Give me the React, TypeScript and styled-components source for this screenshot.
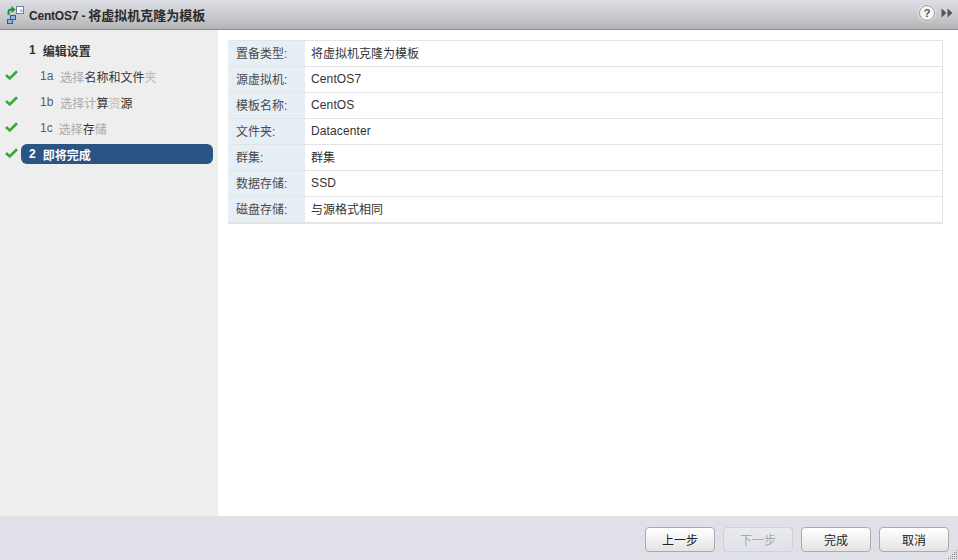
import React from "react";
import styled, { createGlobalStyle } from "styled-components";

const GlobalStyle = createGlobalStyle`
  html, body {
    margin: 0;
    padding: 0;
    background: #fff;
  }
  body {
    font-family: "Liberation Sans", "Noto Sans CJK SC", Arial, sans-serif;
    font-size: 12px;
    color: #333;
  }
`;

const Dialog = styled.div`
  width: 958px;
  height: 560px;
  display: flex;
  flex-direction: column;
  overflow: hidden;
  position: relative;
`;

const TitleBar = styled.div`
  height: 29px;
  flex: none;
  display: flex;
  align-items: center;
  padding: 0 5px 0 7px;
  background: linear-gradient(180deg, #dedfe5 0%, #c9cacd 55%, #b4b5b7 100%);
  border-bottom: 1px solid #8c8c8e;
`;

const TitleText = styled.div`
  margin-left: 4px;
  flex: 1;
  font-size: 13px;
  font-weight: bold;
  color: #2b2b2b;
`;

const TitleLatin = styled.span`
  font-size: 12px;
  letter-spacing: -0.2px;
`;

const HelpButton = styled.div`
  width: 14px;
  height: 14px;
  border-radius: 50%;
  background: #f6f6f6;
  border: 1px solid #9a9a9a;
  box-shadow: 0 0 1px 1px rgba(255, 255, 255, 0.45);
  color: #555;
  font-size: 11px;
  font-weight: bold;
  line-height: 14px;
  text-align: center;
  margin: 0 6px 3px 0;
`;

const ExpandSlot = styled.div`
  display: flex;
  margin-bottom: 3px;
`;

const Body = styled.div`
  flex: 1;
  display: flex;
  min-height: 0;
`;

const Sidebar = styled.div`
  width: 218px;
  flex: none;
  background: #eeeeee;
  padding-top: 7px;
  box-sizing: border-box;
`;

const StepRow = styled.div`
  height: 26px;
  display: flex;
  align-items: center;
  padding-left: 5px;
`;

const CheckSlot = styled.div`
  width: 16px;
  flex: none;
  display: flex;
  align-items: center;
  padding-bottom: 2px;
  box-sizing: border-box;
`;

const StepLabel = styled.div<{ $active?: boolean; $sub?: boolean; $gap: number }>`
  display: flex;
  align-items: center;
  box-sizing: border-box;
  width: 192px;
  height: 20px;
  border-radius: 6px;
  padding-left: ${(p) => (p.$sub ? 19 : 8)}px;
  background: ${(p) => (p.$active ? "#2a5484" : "transparent")};
  color: ${(p) => (p.$active ? "#fff" : "#333")};
  font-weight: ${(p) => (p.$sub ? "normal" : "bold")};
  font-size: 12px;
  gap: ${(p) => p.$gap}px;
`;

const StepNumber = styled.span<{ $sub?: boolean }>`
  color: ${(p) => (p.$sub ? "#555f6b" : "inherit")};
`;

const Faint = styled.span`
  color: #a9a9ab;
`;

const Tinted = styled.span`
  color: #c9b9a6;
`;

const Main = styled.div`
  flex: 1;
  background: #fff;
  padding: 10px 15px 0 10px;
`;

const SummaryTable = styled.div`
  border: 1px solid #e4e4e4;
  border-bottom-width: 2px;
  border-left: none;
  box-sizing: border-box;
  width: 715px;
`;

const SummaryRow = styled.div`
  display: flex;
  height: 26px;
  box-sizing: border-box;
  border-bottom: 1px solid #e4e4e4;

  &:last-child {
    border-bottom: none;
    height: 25px;
  }
`;

const RowLabel = styled.div`
  width: 77px;
  flex: none;
  box-sizing: border-box;
  padding: 1px 0 0 8px;
  background: #e6eef6;
  line-height: 25px;
  color: #4a4a4a;
`;

const RowValue = styled.div<{ $latin: boolean }>`
  flex: 1;
  padding: ${(p) => (p.$latin ? 0 : 1)}px 0 0 6px;
  line-height: 25px;
  color: #333;
  letter-spacing: ${(p) => (p.$latin ? 0.13 : 0)}px;
`;

const Footer = styled.div`
  height: 44px;
  flex: none;
  background: #dfe0e8;
  display: flex;
  justify-content: flex-end;
  align-items: flex-start;
  gap: 8px;
  padding: 11px 9px 0 0;
  box-sizing: border-box;
`;

const FooterButton = styled.div<{ $disabled?: boolean }>`
  width: 70px;
  height: 25px;
  box-sizing: border-box;
  border: 1px solid ${(p) => (p.$disabled ? "#cfd0d6" : "#a9abae")};
  border-radius: 4px;
  background: ${(p) =>
    p.$disabled
      ? "linear-gradient(180deg, #e9eaee 0%, #e1e2e7 100%)"
      : "linear-gradient(180deg, #ffffff 0%, #f1f1f1 55%, #e3e3e3 100%)"};
  color: ${(p) => (p.$disabled ? "#a8a9ad" : "#222")};
  text-align: center;
  padding-top: 1px;
  line-height: 24px;
  font-size: 12px;
`;

const ResizeGrip = styled.svg`
  position: absolute;
  right: 0;
  bottom: 0;
`;

const CloneIcon = () => (
  <svg width="18" height="18" viewBox="0 0 18 18">
    <rect x="9.5" y="0.5" width="7" height="7" fill="#fff" stroke="#6d7f9c" />
    <rect x="13" y="3.5" width="2.5" height="2.5" fill="#9db4d0" />
    <rect x="3.5" y="9.5" width="5" height="4" fill="#8fb4e0" stroke="#2f5c9c" />
    <rect x="0.5" y="13.5" width="5" height="4" fill="#8fb4e0" stroke="#2f5c9c" />
    <path d="M1.5 9 V6 Q1.5 3.5 4 3.5 H5" fill="none" stroke="#1f8f2f" strokeWidth="2" />
    <path d="M4.5 0 L8.5 3.5 L4.5 7 Z" fill="#1f8f2f" />
  </svg>
);

const Check = () => (
  <svg width="13" height="10" viewBox="0 0 13 10">
    <path d="M1 5 L4.7 8.4 L12 1.2" fill="none" stroke="#35a835" strokeWidth="2.6" />
  </svg>
);

const ExpandIcon = () => (
  <svg width="12" height="10" viewBox="0 0 12 10">
    <path d="M0.5 0.5 L5.5 5 L0.5 9.5 Z M6.5 0.5 L11.5 5 L6.5 9.5 Z" fill="#55565a" />
  </svg>
);

const summary = [
  { label: "置备类型:", value: "将虚拟机克隆为模板", latin: false },
  { label: "源虚拟机:", value: "CentOS7", latin: true },
  { label: "模板名称:", value: "CentOS", latin: true },
  { label: "文件夹:", value: "Datacenter", latin: true },
  { label: "群集:", value: "群集", latin: false },
  { label: "数据存储:", value: "SSD", latin: true },
  { label: "磁盘存储:", value: "与源格式相同", latin: false },
];

const grip = [
  [10, 1],
  [8, 3],
  [10, 3],
  [6, 5],
  [8, 5],
  [10, 5],
  [4, 7],
  [6, 7],
  [8, 7],
  [10, 7],
  [2, 9],
  [4, 9],
  [6, 9],
  [8, 9],
  [10, 9],
];

export default function App() {
  return (
    <>
      <GlobalStyle />
      <Dialog>
        <TitleBar>
          <CloneIcon />
          <TitleText>
            <TitleLatin>CentOS7 - </TitleLatin>将虚拟机克隆为模板
          </TitleText>
          <HelpButton>?</HelpButton>
          <ExpandSlot>
            <ExpandIcon />
          </ExpandSlot>
        </TitleBar>
        <Body>
          <Sidebar>
            <StepRow>
              <CheckSlot />
              <StepLabel $gap={7}>
                <StepNumber>1</StepNumber>
                <span>编辑设置</span>
              </StepLabel>
            </StepRow>
            <StepRow>
              <CheckSlot>
                <Check />
              </CheckSlot>
              <StepLabel $sub $gap={7}>
                <StepNumber $sub>1a</StepNumber>
                <span>
                  <Faint>选择</Faint>名称和文件<Tinted>夹</Tinted>
                </span>
              </StepLabel>
            </StepRow>
            <StepRow>
              <CheckSlot>
                <Check />
              </CheckSlot>
              <StepLabel $sub $gap={7}>
                <StepNumber $sub>1b</StepNumber>
                <span>
                  <Faint>选择计</Faint>算<Tinted>资</Tinted>源
                </span>
              </StepLabel>
            </StepRow>
            <StepRow>
              <CheckSlot>
                <Check />
              </CheckSlot>
              <StepLabel $sub $gap={6}>
                <StepNumber $sub>1c</StepNumber>
                <span>
                  <Faint>选择</Faint>存<Faint>储</Faint>
                </span>
              </StepLabel>
            </StepRow>
            <StepRow>
              <CheckSlot>
                <Check />
              </CheckSlot>
              <StepLabel $active $gap={7}>
                <StepNumber>2</StepNumber>
                <span>即将完成</span>
              </StepLabel>
            </StepRow>
          </Sidebar>
          <Main>
            <SummaryTable>
              {summary.map(({ label, value, latin }) => (
                <SummaryRow key={label}>
                  <RowLabel>{label}</RowLabel>
                  <RowValue $latin={latin}>{value}</RowValue>
                </SummaryRow>
              ))}
            </SummaryTable>
          </Main>
        </Body>
        <Footer>
          <FooterButton>上一步</FooterButton>
          <FooterButton $disabled>下一步</FooterButton>
          <FooterButton>完成</FooterButton>
          <FooterButton>取消</FooterButton>
        </Footer>
        <ResizeGrip width="12" height="11" viewBox="0 0 12 11">
          {grip.map(([x, y]) => (
            <rect key={`${x}-${y}`} x={x} y={y} width="1" height="1" fill="#85868c" />
          ))}
        </ResizeGrip>
      </Dialog>
    </>
  );
}
